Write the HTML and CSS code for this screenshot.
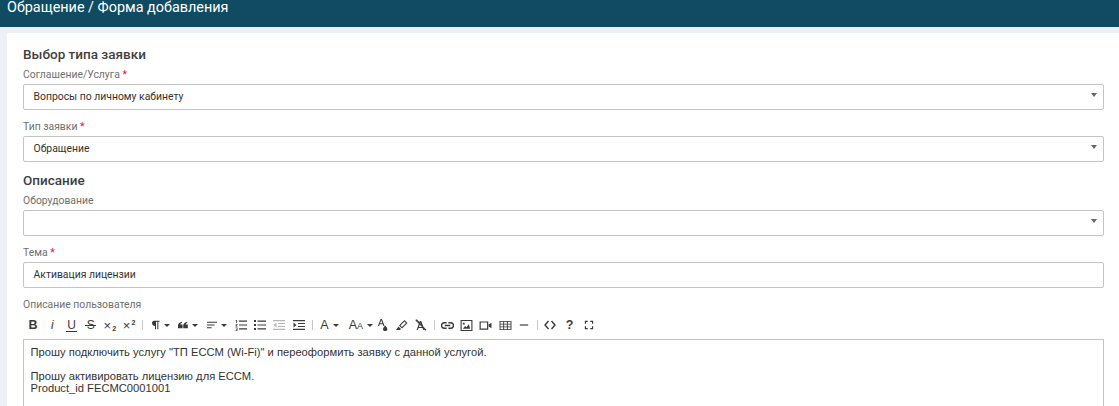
FILE: index.html
```html
<!DOCTYPE html>
<html lang="ru">
<head>
<meta charset="utf-8">
<title>Обращение / Форма добавления</title>
<link rel="stylesheet" href="styles.css">
</head>
<body>
<header class="topbar">Обращение / Форма добавления</header>
<main class="card">
  <h2 class="section first">Выбор типа заявки</h2>
  <div class="field">
    <label class="label">Соглашение/Услуга <span class="req">*</span></label>
    <div class="control select">Вопросы по личному кабинету</div>
  </div>
  <div class="field">
    <label class="label">Тип заявки <span class="req">*</span></label>
    <div class="control select">Обращение</div>
  </div>
  <h2 class="section">Описание</h2>
  <div class="field">
    <label class="label">Оборудование</label>
    <div class="control select"></div>
  </div>
  <div class="field">
    <label class="label">Тема <span class="req">*</span></label>
    <div class="control">Активация лицензии</div>
  </div>
  <div class="field">
    <label class="label">Описание пользователя</label>
    <div class="toolbar">
      <span class="btn txt bold">B</span>
      <span class="btn txt ital">i</span>
      <span class="btn txt under">U</span>
      <span class="btn txt strike">S</span>
      <span class="btn txt">×<sub>2</sub></span>
      <span class="btn txt">×<sup>2</sup></span>
      <span class="sep"></span>
      <span class="btn drop"><svg class="ic" viewBox="0 0 12 12"><path d="M5 1h6.500v1.200H10V11H8.800V2.200H7.200V11H6V7A3 3 0 0 1 5 1z"/></svg><i class="caret"></i></span>
      <span class="btn drop"><svg class="ic" viewBox="0 0 12 12"><path d="M0 10V6.700C0 4.500 1.300 2.900 4.800 2v1.500C3.500 4 2.800 4.700 2.700 5.500H5.500V10zM6.300 10V6.700c0-2.200 1.300-3.800 4.800-4.700v1.500C9.800 4 9.100 4.700 9 5.500H11.800V10z"/></svg><i class="caret"></i></span>
      <span class="btn drop"><svg class="ic" viewBox="0 0 12 12"><path d="M0 2h12v1.200H0zM0 5.400h9v1.200H0zM0 8.800h5.500V10H0z"/></svg><i class="caret"></i></span>
      <span class="btn"><svg class="ic lg" viewBox="0 0 12 12"><path d="M4 1.500h8v1.200H4zM4 5.400h8v1.200H4zM4 9.300h8v1.200H4zM.7 1h1.100v3H1V1.800H.7zM.5 5h2v.7L1.400 6.800h1.100v.6H.5v-.6l1.200-1.200H.5zM.5 8.500h2v3.200h-2V11h1.300v-.6H1v-.5h.8v-.7H.5z"/></svg></span>
      <span class="btn"><svg class="ic lg" viewBox="0 0 12 12"><path d="M3.500 1.500H12v1.200H3.500zM3.500 5.400H12v1.200H3.500zM3.500 9.300H12v1.200H3.500zM0 1h2v2H0zM0 5h2v2H0zM0 9h2v2H0z"/></svg></span>
      <span class="btn"><svg class="ic lg dim" viewBox="0 0 12 12"><path d="M0 1h12v1.200H0zM5 3.900h7v1.200H5zM5 6.900h7v1.200H5zM0 9.800h12V11H0zM3.500 3.500v5L.5 6z"/></svg></span>
      <span class="btn"><svg class="ic lg" viewBox="0 0 12 12"><path d="M0 1h12v1.200H0zM5 3.900h7v1.200H5zM5 6.900h7v1.200H5zM0 9.800h12V11H0zM.5 3.500v5l3-2.500z"/></svg></span>
      <span class="sep wide-sep"></span>
      <span class="btn drop txt big">A<i class="caret"></i></span>
      <span class="btn drop txt big"><span class="aa">A<small>A</small></span><i class="caret"></i></span>
      <span class="btn"><svg class="ic lg" viewBox="0 0 12 12"><path d="M3.600 0h1.300l2.700 7H6.400l-.6-1.700H2.700L2.100 7H.9zM3.100 4.300h2.300L4.200 1.300zM8.200 6.500s2.200 2.300 2.200 3.400a2.200 2.200 0 0 1-4.400 0c0-1.100 2.200-3.400 2.200-3.400z"/></svg></span>
      <span class="btn"><svg class="ic lg" viewBox="0 0 12 12"><path d="M8.500 1 11.500 4 6 9.500 3 6.500zM8.500 2.500 4.500 6.500 6 8l4-4zM2.500 7.500l2.500 2.500-1 1H0z"/></svg></span>
      <span class="btn"><svg class="ic lg" viewBox="0 0 12 12"><path d="M1 .5h1l9.500 10.500-.8.700L.3 1.200zM4.800 2h1.400L9.500 11H8.300l-.7-2H3.500l-.7 2H1.600zM3.900 8h3.300L5.500 3.400z"/></svg></span>
      <span class="sep"></span>
      <span class="btn"><svg class="ic wide" viewBox="0 0 14 12"><path fill="none" stroke="currentColor" stroke-width="1.500" d="M6 3H3.500a3 3 0 0 0 0 6H6M8 3h2.500a3 3 0 0 1 0 6H8M4 6h6"/></svg></span>
      <span class="btn"><svg class="ic wide" viewBox="0 0 14 12"><path fill-rule="evenodd" d="M.5 0h13v12H.5zM1.700 1.200v9.600h10.600V1.200zM3 9.500l2.500-3 1.500 1.500 2.500-3.500 1.500 5zM3 3h2v2H3z"/></svg></span>
      <span class="btn"><svg class="ic wide" viewBox="0 0 14 12"><path fill-rule="evenodd" d="M.5 1.500h9.500v9H.5zM1.800 2.800v6.400h6.900V2.800zM10.500 5l3-2v6l-3-2z"/></svg></span>
      <span class="btn"><svg class="ic wide" viewBox="0 0 14 12"><path fill-rule="evenodd" d="M.5 1h13v10H.5zM1.500 2v2h3V2zM5.500 2v2h3V2zM9.500 2v2h3V2zM1.500 5v2h3V5zM5.500 5v2h3V5zM9.500 5v2h3V5zM1.500 8v2h3V8zM5.500 8v2h3V8zM9.500 8v2h3V8z"/></svg></span>
      <span class="btn"><svg class="ic" viewBox="0 0 12 12"><path d="M1 5.300h10v1.400H1z"/></svg></span>
      <span class="sep"></span>
      <span class="btn"><svg class="ic lg" viewBox="0 0 12 12"><path fill="none" stroke="currentColor" stroke-width="1.400" d="M4.500 2 1 6l3.500 4M7.500 2 11 6l-3.500 4"/></svg></span>
      <span class="btn txt big bold">?</span>
      <span class="btn"><svg class="ic" viewBox="0 0 12 12"><path d="M1 1h3.500v1.400H2.400v2.100H1zM7.500 1H11v3.500H9.600V2.400H7.500zM1 7.500h1.400v2.100h2.100V11H1zM9.600 7.500H11V11H7.500V9.600h2.100z"/></svg></span>
    </div>
    <div class="editor">
      <p>Прошу подключить услугу "ТП ЕССМ (Wi-Fi)" и переоформить заявку с данной услугой.</p>
      <p><br></p>
      <p>Прошу активировать лицензию для ЕССМ.</p>
      <p>Product_id FECMC0001001</p>
    </div>
  </div>
</main>
</body>
</html>
```
FILE: styles.css
```css
* { box-sizing: border-box; }
html, body { margin: 0; height: 100%; overflow: hidden; }
body { background: #edf1f7; font-family: Roboto, "Noto Sans", sans-serif; color: #333; }
.topbar {
  height: 27px;
  background: #0f4c63;
  color: #fff;
  font-size: 14.4px;
  line-height: 16px;
  padding-left: 7px;
}
.card {
  margin: 6px 0 0 7px;
  background: #fff;
  padding: 0 15px 0 16px;
  height: 373px;
  overflow: hidden;
}
.section {
  margin: 0;
  padding-top: 2px;
  height: 22px;
  font-size: 13.5px;
  line-height: 16px;
  font-weight: 500;
  color: #3f3f3f;
}
.section.first { padding-top: 13px; height: 33px; }
.field { margin-bottom: 8px; }
.label {
  display: block;
  height: 18px;
  font-size: 10.4px;
  line-height: 18px;
  color: #6f6f6f;
}
.req { color: #e8202a; }
.control {
  position: relative;
  height: 26px;
  border: 1px solid #c4c4c4;
  border-radius: 2px;
  padding-left: 9.5px;
  font-size: 10.4px;
  line-height: 24px;
  color: #333;
  background: #fff;
}
.select::after {
  content: "";
  position: absolute;
  right: 6px;
  top: 8px;
  border: 3.5px solid transparent;
  border-top: 4px solid #666;
  border-bottom: 0;
}
.toolbar {
  display: flex;
  align-items: center;
  height: 17px;
  margin-top: 2.5px;
  margin-bottom: 5.5px;
  padding-left: 0.5px;
  color: #3a3a3a;
}
.btn {
  position: relative;
  display: flex;
  align-items: center;
  justify-content: center;
  flex: 0 0 19.2px;
  height: 17px;
}
.btn.drop { flex-basis: 28.6px; justify-content: flex-start; padding-left: 4px; gap: 4px; }
.sep { flex: 0 0 1px; height: 10px; background: #c8c8c8; margin: 0 3px; }
.sep.wide-sep { margin-left: 4px; }
.ic { width: 10px; height: 10px; fill: currentColor; display: block; }
.ic.lg { width: 12px; height: 12px; }
.ic.wide { width: 13px; height: 11px; }
.ic.dim { color: #b5b5b5; }
.caret {
  width: 0;
  height: 0;
  border: 3px solid transparent;
  border-top: 3px solid #3a3a3a;
  border-bottom: 0;
}
.txt { font-size: 13px; font-family: "Liberation Sans", Arial, sans-serif; }
.txt sub, .txt sup { font-size: 7px; font-weight: 700; line-height: 1; margin-left: 1px; }
.txt sub { margin-top: 7px; }
.txt sup { margin-top: -6px; }
.txt.big { font-size: 12.5px; }
.aa { white-space: nowrap; }
.txt small { font-size: 9px; }
.bold { font-weight: 700; font-size: 12.5px; }
.ital { font-style: italic; font-size: 12px; }
.under, .strike { font-size: 12px; }
.under::after, .strike::after {
  content: "";
  position: absolute;
  left: 4px;
  right: 4px;
  height: 1px;
  background: currentColor;
}
.under::after { bottom: 2px; }
.strike::after { top: 8px; }
.editor {
  border: 1px solid #c4c4c4;
  padding: 6px 6.5px;
  height: 120px;
  font-family: "Liberation Sans", Arial, sans-serif;
  font-size: 11.2px;
  line-height: 12px;
  color: #333;
}
.editor p { margin: 0; }
```
